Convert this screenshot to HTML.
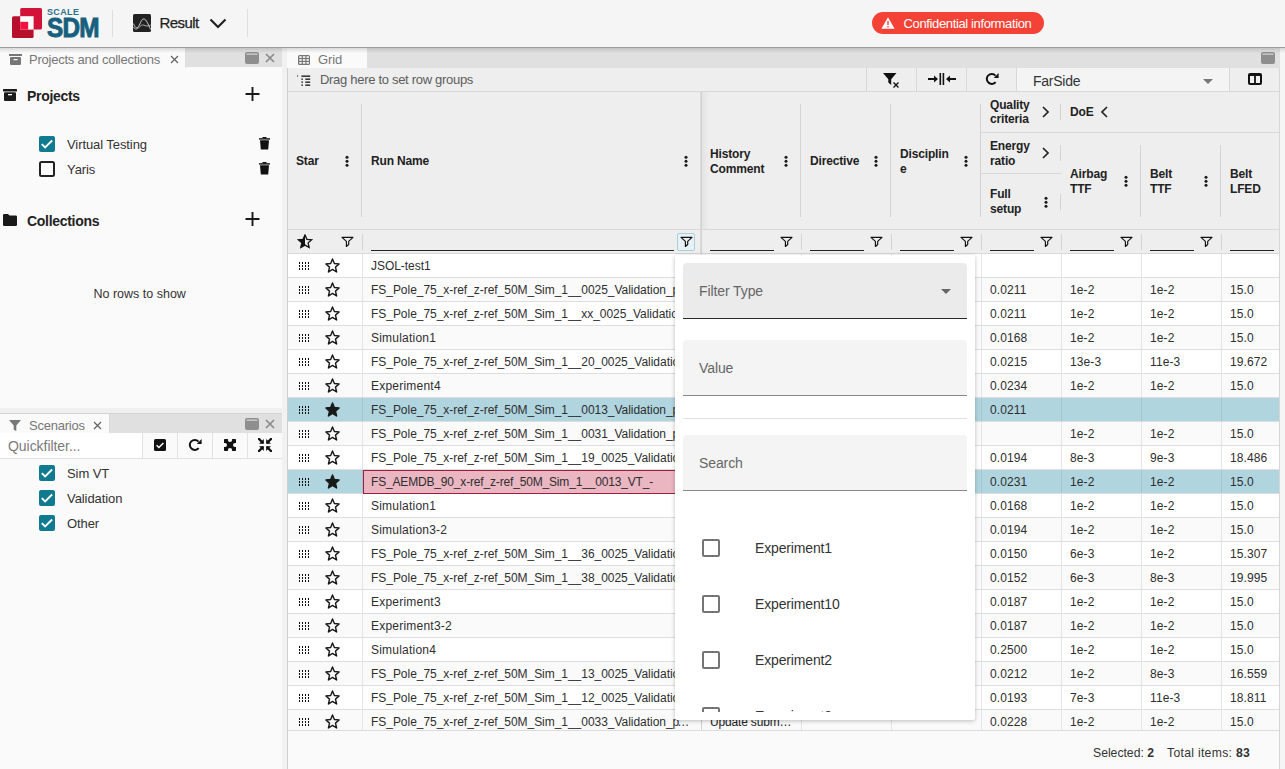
<!DOCTYPE html><html><head><meta charset="utf-8"><style>
*{box-sizing:border-box}
html,body{margin:0;padding:0}
body{width:1285px;height:769px;overflow:hidden;position:relative;background:#f5f5f5;font-family:"Liberation Sans",sans-serif;}
.t{position:absolute;white-space:nowrap;line-height:1}
.r{position:absolute}
.ic{position:absolute;line-height:0}
</style></head><body>
<div class="r" style="left:0px;top:0px;width:1285px;height:47px;background:#f5f5f5;"></div>
<div class="r" style="left:0px;top:47px;width:1285px;height:1px;background:#9c9c9c;z-index:60"></div>
<div class="r" style="left:0px;top:48px;width:1285px;height:5px;background:linear-gradient(rgba(0,0,0,.13),rgba(0,0,0,0));z-index:60"></div>
<svg class="ic" style="left:12px;top:8px" width="31" height="31" viewBox="0 0 31 31">
<rect x="0" y="8.2" width="21.6" height="21.8" rx="1.6" fill="#b8102c"/>
<rect x="8.2" y="0" width="21.8" height="21.6" rx="1.6" fill="#d3123a"/>
<rect x="8.2" y="8.2" width="13.4" height="13.4" fill="#ffffff"/>
<rect x="8.2" y="13.8" width="8" height="7.8" fill="#f2133e"/>
</svg>
<div class="t" style="left:47px;top:7.5px;font-size:9px;color:#2a6f8c;font-weight:bold;letter-spacing:0.35px;transform-origin:0 0;">SCALE</div>
<div class="t" style="left:46.5px;top:15px;font-size:27px;color:#16607e;font-weight:bold;letter-spacing:-0.8px;transform:scaleX(0.9);transform-origin:0 0;-webkit-text-stroke:0.9px #16607e;">SDM</div>
<div class="r" style="left:112px;top:10px;width:1px;height:27px;background:#dedede;"></div>
<svg class="ic" style="left:133px;top:14px" width="18" height="18" viewBox="0 0 18 18">
<rect x="0" y="0" width="18" height="18" rx="1.5" fill="#222"/>
<path d="M0.3 9.5C2 13, 3.5 15.5, 5.5 12.5S8.5 4.5, 11 5 15 10, 17.7 15.5" fill="none" stroke="#e0e0e0" stroke-width="0.9"/>
<path d="M0.3 13C2.5 16.5, 4.5 15, 7.5 12S13 14, 17.7 11" fill="none" stroke="#cfcfcf" stroke-width="0.8"/>
</svg>
<div class="t" style="left:159.5px;top:14.8px;font-size:15px;color:#1e1e1e;font-weight:normal;letter-spacing:-0.55px;-webkit-text-stroke:0.25px #1e1e1e;">Result</div>
<svg class="ic" style="left:209px;top:18px" width="18" height="11" viewBox="0 0 18 11"><path d="M1.5 1.5l7.5 7.5 7.5-7.5" fill="none" stroke="#222" stroke-width="2.2"/></svg>
<div class="r" style="left:247px;top:9px;width:1px;height:28px;background:#dedede;"></div>
<div class="r" style="left:872px;top:12px;width:172px;height:22px;background:#f44336;border-radius:11px"></div>
<svg class="ic" style="left:881px;top:17px" width="14" height="12" viewBox="0 0 14 12"><path d="M7 0.3L13.6 11.7H0.4z" fill="#fff"/><rect x="6.3" y="4" width="1.4" height="4" fill="#f44336"/><rect x="6.3" y="9" width="1.4" height="1.4" fill="#f44336"/></svg>
<div class="t" style="left:903.5px;top:17.3px;font-size:13px;color:#fff;font-weight:normal;letter-spacing:-0.36px;">Confidential information</div>
<div class="r" style="left:0px;top:48px;width:282px;height:721px;background:#fafafa;"></div>
<div class="r" style="left:0px;top:47px;width:282px;height:20px;background:#e0e0e0;"></div>
<div class="r" style="left:0px;top:47px;width:186px;height:21px;background:#fafafa;"></div>
<div class="r" style="left:185px;top:48px;width:1px;height:20px;background:#dedede;"></div>
<svg class="ic" style="left:9px;top:54px" width="13" height="11" viewBox="0 0 13 11"><rect x="0" y="0" width="13" height="2" fill="#777"/><rect x="1" y="3" width="11" height="8" rx="1" fill="#777"/><rect x="4.5" y="5" width="4" height="1.2" fill="#fafafa"/></svg>
<div class="t" style="left:29px;top:53px;font-size:13px;color:#777;font-weight:normal;letter-spacing:-0.23px;">Projects and collections</div>
<svg class="ic" style="left:170px;top:55px" width="9" height="9" viewBox="0 0 9 9"><path d="M1 1l7 7M8 1L1 8" stroke="#616161" stroke-width="1.2"/></svg>
<svg class="ic" style="left:245px;top:52px" width="14" height="12" viewBox="0 0 14 12"><rect x="0" y="0" width="14" height="12" rx="2" fill="#8e8e8e"/><rect x="1.5" y="1.6" width="11" height="1" fill="#e6e6e6"/></svg>
<svg class="ic" style="left:265px;top:53px" width="10" height="10" viewBox="0 0 10 10"><path d="M1 1l8 8M9 1L1 9" stroke="#8a8a8a" stroke-width="1.7"/></svg>
<svg class="ic" style="left:3px;top:89px" width="14" height="12" viewBox="0 0 14 12"><rect x="0" y="0" width="14" height="2.4" rx="0.5" fill="#1a1a1a"/><rect x="1" y="3.2" width="12" height="8.8" rx="1" fill="#1a1a1a"/><rect x="5" y="5" width="4" height="1.3" fill="#fafafa"/></svg>
<div class="t" style="left:27px;top:89px;font-size:14px;color:#222;font-weight:bold;letter-spacing:-0.3px;">Projects</div>
<svg class="ic" style="left:245px;top:87px" width="15" height="14" viewBox="0 0 15 14"><path d="M7.5 0v14M0.5 7h14" stroke="#1a1a1a" stroke-width="1.9"/></svg>
<svg class="ic" style="left:39px;top:136px" width="16" height="16" viewBox="0 0 16 16"><rect x="0" y="0" width="16" height="16" rx="2" fill="#107a90"/><path d="M2.8 8.2l3.3 3.3 7-7" fill="none" stroke="#fff" stroke-width="1.9"/></svg>
<div class="t" style="left:67px;top:138px;font-size:13px;color:#333;font-weight:normal;letter-spacing:-0.08px;">Virtual Testing</div>
<svg class="ic" style="left:259px;top:137px" width="11" height="13" viewBox="0 0 11 13"><rect x="0" y="1.2" width="11" height="1.4" fill="#111"/><rect x="3.5" y="0" width="4" height="1.5" fill="#111"/><path d="M1 3.2h9l-0.8 9.3H1.8z" fill="#111"/></svg>
<svg class="ic" style="left:39px;top:161px" width="16" height="16" viewBox="0 0 16 16"><rect x="1" y="1" width="14" height="14" rx="1.5" fill="none" stroke="#222" stroke-width="2"/></svg>
<div class="t" style="left:67px;top:163.3px;font-size:13px;color:#333;font-weight:normal;letter-spacing:-0.08px;">Yaris</div>
<svg class="ic" style="left:259px;top:162px" width="11" height="13" viewBox="0 0 11 13"><rect x="0" y="1.2" width="11" height="1.4" fill="#111"/><rect x="3.5" y="0" width="4" height="1.5" fill="#111"/><path d="M1 3.2h9l-0.8 9.3H1.8z" fill="#111"/></svg>
<svg class="ic" style="left:3px;top:214px" width="14" height="12" viewBox="0 0 14 12"><path d="M0 1.2Q0 0 1.2 0H5l1.5 1.6h6.3Q14 1.6 14 2.8V10.8Q14 12 12.8 12H1.2Q0 12 0 10.8z" fill="#1a1a1a"/></svg>
<div class="t" style="left:27px;top:214px;font-size:14px;color:#222;font-weight:bold;letter-spacing:-0.3px;">Collections</div>
<svg class="ic" style="left:245px;top:212px" width="15" height="14" viewBox="0 0 15 14"><path d="M7.5 0v14M0.5 7h14" stroke="#1a1a1a" stroke-width="1.9"/></svg>
<div class="t" style="left:93.5px;top:288px;font-size:12.5px;color:#333;font-weight:normal;letter-spacing:0px;">No rows to show</div>
<div class="r" style="left:0px;top:408px;width:282px;height:5px;background:#f0f0f0;"></div>
<div class="r" style="left:0px;top:413px;width:282px;height:20px;background:#e0e0e0;"></div>
<div class="r" style="left:0px;top:413px;width:282px;height:1px;background:#d2d2d2;"></div>
<div class="r" style="left:0px;top:414px;width:110px;height:20px;background:#fafafa;"></div>
<div class="r" style="left:109px;top:414px;width:1px;height:20px;background:#dadada;"></div>
<svg class="ic" style="left:9px;top:420px" width="12" height="11" viewBox="0 0 12 11"><path d="M0 0h12L7.3 5.5V11L4.7 9.7V5.5z" fill="#777"/></svg>
<div class="t" style="left:29px;top:419px;font-size:13px;color:#777;font-weight:normal;letter-spacing:-0.23px;">Scenarios</div>
<svg class="ic" style="left:93px;top:421px" width="9" height="9" viewBox="0 0 9 9"><path d="M1 1l7 7M8 1L1 8" stroke="#616161" stroke-width="1.2"/></svg>
<svg class="ic" style="left:245px;top:418px" width="14" height="12" viewBox="0 0 14 12"><rect x="0" y="0" width="14" height="12" rx="2" fill="#8e8e8e"/><rect x="1.5" y="1.6" width="11" height="1" fill="#e6e6e6"/></svg>
<svg class="ic" style="left:265px;top:419px" width="10" height="10" viewBox="0 0 10 10"><path d="M1 1l8 8M9 1L1 9" stroke="#8a8a8a" stroke-width="1.7"/></svg>
<div class="r" style="left:0px;top:433px;width:282px;height:25px;background:#fafafa;"></div>
<div class="r" style="left:0px;top:433px;width:142px;height:25px;background:#ffffff;"></div>
<div class="r" style="left:0px;top:458px;width:282px;height:1px;background:#e2e2e2;"></div>
<div class="r" style="left:142px;top:433px;width:1px;height:25px;background:#e2e2e2;"></div>
<div class="r" style="left:177px;top:433px;width:1px;height:25px;background:#e2e2e2;"></div>
<div class="r" style="left:212px;top:433px;width:1px;height:25px;background:#e2e2e2;"></div>
<div class="r" style="left:247px;top:433px;width:1px;height:25px;background:#e2e2e2;"></div>
<div class="t" style="left:8px;top:439.3px;font-size:14px;color:#7a7a7a;font-weight:normal;letter-spacing:-0.05px;">Quickfilter...</div>
<svg class="ic" style="left:154px;top:439px" width="12" height="12" viewBox="0 0 12 12"><rect width="12" height="12" rx="1.5" fill="#111"/><path d="M2.6 6.2l2.3 2.3 4.5-4.6" fill="none" stroke="#fff" stroke-width="1.5"/></svg>
<svg class="ic" style="left:186.5px;top:438px" width="16" height="14" viewBox="0 0 16 14"><path d="M11.5 3.55A5 5 0 1 0 11.63 10.11" fill="none" stroke="#111" stroke-width="2"/><path d="M14.6 1.1V5.9H9.8z" fill="#111"/></svg>
<svg class="ic" style="left:224px;top:439px" width="12" height="12" viewBox="0 0 12 12"><rect width="12" height="12" rx="0.8" fill="#111"/><circle cx="6" cy="0.9" r="2.1" fill="#fafafa"/><circle cx="6" cy="11.1" r="2.1" fill="#fafafa"/><circle cx="0.9" cy="6" r="2.1" fill="#fafafa"/><circle cx="11.1" cy="6" r="2.1" fill="#fafafa"/></svg>
<svg class="ic" style="left:258px;top:438px" width="14" height="14" viewBox="0 0 14 14"><path d="M1 5.8H5.8V1zM13 5.8H8.2V1zM1 8.2H5.8V13zM13 8.2H8.2V13z" fill="#111"/><path d="M0.9 0.9L4.5 4.5M13.1 0.9L9.5 4.5M0.9 13.1L4.5 9.5M13.1 13.1L9.5 9.5" stroke="#111" stroke-width="2.2" stroke-linecap="round"/></svg>
<svg class="ic" style="left:39px;top:465px" width="16" height="16" viewBox="0 0 16 16"><rect x="0" y="0" width="16" height="16" rx="2" fill="#107a90"/><path d="M2.8 8.2l3.3 3.3 7-7" fill="none" stroke="#fff" stroke-width="1.9"/></svg>
<div class="t" style="left:67px;top:467px;font-size:13px;color:#333;font-weight:normal;letter-spacing:-0.08px;">Sim VT</div>
<svg class="ic" style="left:39px;top:490px" width="16" height="16" viewBox="0 0 16 16"><rect x="0" y="0" width="16" height="16" rx="2" fill="#107a90"/><path d="M2.8 8.2l3.3 3.3 7-7" fill="none" stroke="#fff" stroke-width="1.9"/></svg>
<div class="t" style="left:67px;top:492px;font-size:13px;color:#333;font-weight:normal;letter-spacing:-0.08px;">Validation</div>
<svg class="ic" style="left:39px;top:515px" width="16" height="16" viewBox="0 0 16 16"><rect x="0" y="0" width="16" height="16" rx="2" fill="#107a90"/><path d="M2.8 8.2l3.3 3.3 7-7" fill="none" stroke="#fff" stroke-width="1.9"/></svg>
<div class="t" style="left:67px;top:517px;font-size:13px;color:#333;font-weight:normal;letter-spacing:-0.08px;">Other</div>
<div class="r" style="left:282px;top:47px;width:5px;height:722px;background:#f1f1f1;"></div>
<div class="r" style="left:1280px;top:47px;width:5px;height:722px;background:#f5f5f5;"></div>
<div class="r" style="left:287px;top:47px;width:993px;height:21px;background:#e0e0e0;"></div>
<div class="r" style="left:287px;top:47px;width:80px;height:21px;background:#fafafa;"></div>
<svg class="ic" style="left:298px;top:55px" width="12" height="10" viewBox="0 0 12 10"><rect width="12" height="10" rx="1.5" fill="#777"/><rect x="1.3" y="1.2" width="2.4" height="1.7" fill="#fafafa"/><rect x="1.3" y="4.1" width="2.4" height="1.7" fill="#fafafa"/><rect x="1.3" y="7.0" width="2.4" height="1.7" fill="#fafafa"/><rect x="4.9" y="1.2" width="2.4" height="1.7" fill="#fafafa"/><rect x="4.9" y="4.1" width="2.4" height="1.7" fill="#fafafa"/><rect x="4.9" y="7.0" width="2.4" height="1.7" fill="#fafafa"/><rect x="8.5" y="1.2" width="2.4" height="1.7" fill="#fafafa"/><rect x="8.5" y="4.1" width="2.4" height="1.7" fill="#fafafa"/><rect x="8.5" y="7.0" width="2.4" height="1.7" fill="#fafafa"/></svg>
<div class="t" style="left:318px;top:53px;font-size:13px;color:#777;font-weight:normal;letter-spacing:-0.1px;">Grid</div>
<svg class="ic" style="left:1261px;top:52px" width="14" height="12" viewBox="0 0 14 12"><rect x="0" y="0" width="14" height="12" rx="2" fill="#8e8e8e"/><rect x="1.5" y="1.6" width="11" height="1" fill="#e6e6e6"/></svg>
<div class="r" style="left:287px;top:68px;width:993px;height:701px;background:#fafafa;"></div>
<div class="r" style="left:287px;top:68px;width:1px;height:701px;background:#d0d0d0;"></div>
<div class="r" style="left:1279px;top:68px;width:1px;height:701px;background:#d6d6d6;"></div>
<div class="r" style="left:288px;top:68px;width:991px;height:23px;background:#eeeeee;"></div>
<div class="r" style="left:288px;top:91px;width:991px;height:1px;background:#d8d8d8;"></div>
<svg class="ic" style="left:297px;top:74.5px" width="14" height="11" viewBox="0 0 14 11"><rect x="0" y="0.5" width="1" height="1" fill="#111"/><rect x="4.4" y="0.5" width="8.8" height="1.3" fill="#111"/><rect x="4.4" y="3.5" width="1.5" height="1.3" fill="#111"/><rect x="8.3" y="3.5" width="4.9" height="1.3" fill="#111"/><rect x="4.4" y="6.5" width="1.5" height="1.3" fill="#111"/><rect x="8.3" y="6.5" width="4.9" height="1.3" fill="#111"/><rect x="4.4" y="9.5" width="1.5" height="1.3" fill="#111"/><rect x="8.3" y="9.5" width="4.9" height="1.3" fill="#111"/></svg>
<div class="t" style="left:320px;top:73px;font-size:13px;color:#5c5c5c;font-weight:normal;letter-spacing:-0.3px;">Drag here to set row groups</div>
<div class="r" style="left:866px;top:68px;width:1px;height:23px;background:#d8d8d8;"></div>
<div class="r" style="left:916px;top:68px;width:1px;height:23px;background:#d8d8d8;"></div>
<div class="r" style="left:966px;top:68px;width:1px;height:23px;background:#d8d8d8;"></div>
<div class="r" style="left:1016px;top:68px;width:213px;height:23px;background:#f4f4f4;"></div>
<div class="r" style="left:1016px;top:68px;width:1px;height:23px;background:#d8d8d8;"></div>
<div class="r" style="left:1229px;top:68px;width:1px;height:23px;background:#d8d8d8;"></div>
<svg class="ic" style="left:883px;top:73px" width="18" height="16" viewBox="0 0 18 16"><path d="M0 0h13.5L8.2 6.2V12L5.3 9.5V6.2z" fill="#111"/><path d="M10.5 9.5l5 5M15.5 9.5l-5 5" stroke="#111" stroke-width="1.4"/></svg>
<svg class="ic" style="left:928px;top:73px" width="28" height="12" viewBox="0 0 28 12"><path d="M0 6h7" stroke="#111" stroke-width="2"/><path d="M6 2.5l4 3.5-4 3.5z" fill="#111"/><rect x="11.5" y="0" width="1.6" height="12" fill="#111"/><rect x="14.6" y="0" width="1.6" height="12" fill="#111"/><path d="M21 6h7" stroke="#111" stroke-width="2"/><path d="M22 2.5l-4 3.5 4 3.5z" fill="#111"/></svg>
<svg class="ic" style="left:984px;top:72px" width="16" height="14" viewBox="0 0 16 14"><path d="M11.5 3.55A5 5 0 1 0 11.63 10.11" fill="none" stroke="#111" stroke-width="2"/><path d="M14.6 1.1V5.9H9.8z" fill="#111"/></svg>
<div class="t" style="left:1033px;top:74px;font-size:14px;color:#333;font-weight:normal;letter-spacing:-0.25px;">FarSide</div>
<svg class="ic" style="left:1203px;top:79px" width="10" height="5" viewBox="0 0 10 5"><path d="M0 0h10L5 5z" fill="#777"/></svg>
<svg class="ic" style="left:1248px;top:73px" width="14" height="12" viewBox="0 0 14 12"><rect x="0" y="0" width="14" height="12" rx="2" fill="#111"/><rect x="2" y="3" width="4.1" height="7" fill="#f0f0f0"/><rect x="7.9" y="3" width="4.1" height="7" fill="#f0f0f0"/></svg>
<div class="r" style="left:288px;top:92px;width:991px;height:137px;background:#eeeeee;"></div>
<div class="r" style="left:288px;top:229px;width:991px;height:1px;background:#d8d8d8;"></div>
<div class="r" style="left:288px;top:230px;width:991px;height:23px;background:#eeeeee;"></div>
<div class="r" style="left:288px;top:253px;width:991px;height:1px;background:#d8d8d8;"></div>
<div class="t" style="left:296px;top:155px;font-size:12px;color:#222;font-weight:bold;letter-spacing:-0.15px;">Star</div>
<div class="ic" style="left:345px;top:155px"><svg width="4" height="13" viewBox="0 0 4 13"><circle cx="2" cy="2.2" r="1.5" fill="#1a1a1a"/><circle cx="2" cy="6.2" r="1.5" fill="#1a1a1a"/><circle cx="2" cy="10.2" r="1.5" fill="#1a1a1a"/></svg></div>
<div class="r" style="left:361px;top:104px;width:1px;height:113px;background:#d4d4d4;"></div>
<div class="t" style="left:371px;top:155px;font-size:12px;color:#222;font-weight:bold;letter-spacing:-0.15px;">Run Name</div>
<div class="ic" style="left:684px;top:155px"><svg width="4" height="13" viewBox="0 0 4 13"><circle cx="2" cy="2.2" r="1.5" fill="#1a1a1a"/><circle cx="2" cy="6.2" r="1.5" fill="#1a1a1a"/><circle cx="2" cy="10.2" r="1.5" fill="#1a1a1a"/></svg></div>
<div class="t" style="left:710px;top:148px;font-size:12px;color:#222;font-weight:bold;letter-spacing:-0.15px;">History</div>
<div class="t" style="left:710px;top:163px;font-size:12px;color:#222;font-weight:bold;letter-spacing:-0.15px;">Comment</div>
<div class="ic" style="left:784px;top:155px"><svg width="4" height="13" viewBox="0 0 4 13"><circle cx="2" cy="2.2" r="1.5" fill="#1a1a1a"/><circle cx="2" cy="6.2" r="1.5" fill="#1a1a1a"/><circle cx="2" cy="10.2" r="1.5" fill="#1a1a1a"/></svg></div>
<div class="r" style="left:800px;top:104px;width:1px;height:113px;background:#d4d4d4;"></div>
<div class="t" style="left:810px;top:155px;font-size:12px;color:#222;font-weight:bold;letter-spacing:-0.15px;">Directive</div>
<div class="ic" style="left:874px;top:155px"><svg width="4" height="13" viewBox="0 0 4 13"><circle cx="2" cy="2.2" r="1.5" fill="#1a1a1a"/><circle cx="2" cy="6.2" r="1.5" fill="#1a1a1a"/><circle cx="2" cy="10.2" r="1.5" fill="#1a1a1a"/></svg></div>
<div class="r" style="left:890px;top:104px;width:1px;height:113px;background:#d4d4d4;"></div>
<div class="t" style="left:900px;top:148px;font-size:12px;color:#222;font-weight:bold;letter-spacing:-0.15px;">Disciplin</div>
<div class="t" style="left:900px;top:163px;font-size:12px;color:#222;font-weight:bold;letter-spacing:-0.15px;">e</div>
<div class="ic" style="left:964px;top:155px"><svg width="4" height="13" viewBox="0 0 4 13"><circle cx="2" cy="2.2" r="1.5" fill="#1a1a1a"/><circle cx="2" cy="6.2" r="1.5" fill="#1a1a1a"/><circle cx="2" cy="10.2" r="1.5" fill="#1a1a1a"/></svg></div>
<div class="r" style="left:980px;top:104px;width:1px;height:113px;background:#d4d4d4;"></div>
<div class="r" style="left:981px;top:132px;width:298px;height:1px;background:#d8d8d8;"></div>
<div class="r" style="left:981px;top:173px;width:80px;height:1px;background:#d8d8d8;"></div>
<div class="t" style="left:990px;top:99px;font-size:12px;color:#222;font-weight:bold;letter-spacing:-0.15px;">Quality</div>
<div class="t" style="left:990px;top:113px;font-size:12px;color:#222;font-weight:bold;letter-spacing:-0.15px;">criteria</div>
<svg class="ic" style="left:1042px;top:106px" width="7" height="12" viewBox="0 0 7 12"><path d="M1 1l5 5-5 5" fill="none" stroke="#222" stroke-width="1.6"/></svg>
<div class="r" style="left:1060px;top:104px;width:1px;height:16px;background:#d4d4d4;"></div>
<div class="t" style="left:1070px;top:106px;font-size:12px;color:#222;font-weight:bold;letter-spacing:-0.15px;">DoE</div>
<svg class="ic" style="left:1101px;top:106px" width="7" height="12" viewBox="0 0 7 12"><path d="M6 1L1 6l5 5" fill="none" stroke="#222" stroke-width="1.6"/></svg>
<div class="t" style="left:990px;top:140px;font-size:12px;color:#222;font-weight:bold;letter-spacing:-0.15px;">Energy</div>
<div class="t" style="left:990px;top:155px;font-size:12px;color:#222;font-weight:bold;letter-spacing:-0.15px;">ratio</div>
<svg class="ic" style="left:1042px;top:147px" width="7" height="12" viewBox="0 0 7 12"><path d="M1 1l5 5-5 5" fill="none" stroke="#222" stroke-width="1.6"/></svg>
<div class="r" style="left:1060px;top:145px;width:1px;height:16px;background:#d4d4d4;"></div>
<div class="t" style="left:990px;top:188px;font-size:12px;color:#222;font-weight:bold;letter-spacing:-0.15px;">Full</div>
<div class="t" style="left:990px;top:203px;font-size:12px;color:#222;font-weight:bold;letter-spacing:-0.15px;">setup</div>
<div class="ic" style="left:1044px;top:196px"><svg width="4" height="13" viewBox="0 0 4 13"><circle cx="2" cy="2.2" r="1.5" fill="#1a1a1a"/><circle cx="2" cy="6.2" r="1.5" fill="#1a1a1a"/><circle cx="2" cy="10.2" r="1.5" fill="#1a1a1a"/></svg></div>
<div class="r" style="left:1060px;top:194px;width:1px;height:16px;background:#d4d4d4;"></div>
<div class="t" style="left:1070px;top:168px;font-size:12px;color:#222;font-weight:bold;letter-spacing:-0.15px;">Airbag</div>
<div class="t" style="left:1070px;top:183px;font-size:12px;color:#222;font-weight:bold;letter-spacing:-0.15px;">TTF</div>
<div class="ic" style="left:1124px;top:175px"><svg width="4" height="13" viewBox="0 0 4 13"><circle cx="2" cy="2.2" r="1.5" fill="#1a1a1a"/><circle cx="2" cy="6.2" r="1.5" fill="#1a1a1a"/><circle cx="2" cy="10.2" r="1.5" fill="#1a1a1a"/></svg></div>
<div class="r" style="left:1140px;top:145px;width:1px;height:72px;background:#d4d4d4;"></div>
<div class="t" style="left:1150px;top:168px;font-size:12px;color:#222;font-weight:bold;letter-spacing:-0.15px;">Belt</div>
<div class="t" style="left:1150px;top:183px;font-size:12px;color:#222;font-weight:bold;letter-spacing:-0.15px;">TTF</div>
<div class="ic" style="left:1204px;top:175px"><svg width="4" height="13" viewBox="0 0 4 13"><circle cx="2" cy="2.2" r="1.5" fill="#1a1a1a"/><circle cx="2" cy="6.2" r="1.5" fill="#1a1a1a"/><circle cx="2" cy="10.2" r="1.5" fill="#1a1a1a"/></svg></div>
<div class="r" style="left:1220px;top:145px;width:1px;height:72px;background:#d4d4d4;"></div>
<div class="t" style="left:1230px;top:168px;font-size:12px;color:#222;font-weight:bold;letter-spacing:-0.15px;">Belt</div>
<div class="t" style="left:1230px;top:183px;font-size:12px;color:#222;font-weight:bold;letter-spacing:-0.15px;">LFED</div>
<svg class="ic" style="left:297px;top:234px" width="16" height="15" viewBox="0 0 24 23"><path d="M12 1.5l3 6.6 7.2.7-5.4 4.8 1.6 7.1L12 17l-6.4 3.7 1.6-7.1L1.8 8.8 9 8.1z" fill="none" stroke="#111" stroke-width="2"/><path d="M12 1.5L9 8.1 1.8 8.8l5.4 4.8-1.6 7.1L12 17z" fill="#111"/></svg>
<div class="ic" style="left:341px;top:236px"><svg width="13" height="12" viewBox="0 0 13 12"><path d="M1 1.4H12L7.7 5.4V8.5L5.4 10.5V5.4Z" fill="none" stroke="#111" stroke-width="1.15" stroke-linejoin="round"/></svg></div>
<div class="r" style="left:362px;top:234px;width:1px;height:16px;background:#d4d4d4;"></div>
<div class="r" style="left:371px;top:250px;width:303px;height:1px;background:#222;"></div>
<div class="r" style="left:677px;top:233px;width:18px;height:18px;background:#e8f1f4;border:1px solid #a9cfdc;border-radius:2px"></div>
<div class="ic" style="left:680px;top:236px"><svg width="13" height="12" viewBox="0 0 13 12"><path d="M1 1.4H12L7.7 5.4V8.5L5.4 10.5V5.4Z" fill="none" stroke="#111" stroke-width="1.15" stroke-linejoin="round"/></svg></div>
<div class="r" style="left:710px;top:250px;width:64px;height:1px;background:#222;"></div>
<div class="ic" style="left:780px;top:236px"><svg width="13" height="12" viewBox="0 0 13 12"><path d="M1 1.4H12L7.7 5.4V8.5L5.4 10.5V5.4Z" fill="none" stroke="#111" stroke-width="1.15" stroke-linejoin="round"/></svg></div>
<div class="r" style="left:801px;top:234px;width:1px;height:16px;background:#d4d4d4;"></div>
<div class="r" style="left:810px;top:250px;width:54px;height:1px;background:#222;"></div>
<div class="ic" style="left:870px;top:236px"><svg width="13" height="12" viewBox="0 0 13 12"><path d="M1 1.4H12L7.7 5.4V8.5L5.4 10.5V5.4Z" fill="none" stroke="#111" stroke-width="1.15" stroke-linejoin="round"/></svg></div>
<div class="r" style="left:891px;top:234px;width:1px;height:16px;background:#d4d4d4;"></div>
<div class="r" style="left:900px;top:250px;width:54px;height:1px;background:#222;"></div>
<div class="ic" style="left:960px;top:236px"><svg width="13" height="12" viewBox="0 0 13 12"><path d="M1 1.4H12L7.7 5.4V8.5L5.4 10.5V5.4Z" fill="none" stroke="#111" stroke-width="1.15" stroke-linejoin="round"/></svg></div>
<div class="r" style="left:981px;top:234px;width:1px;height:16px;background:#d4d4d4;"></div>
<div class="r" style="left:990px;top:250px;width:44px;height:1px;background:#222;"></div>
<div class="ic" style="left:1040px;top:236px"><svg width="13" height="12" viewBox="0 0 13 12"><path d="M1 1.4H12L7.7 5.4V8.5L5.4 10.5V5.4Z" fill="none" stroke="#111" stroke-width="1.15" stroke-linejoin="round"/></svg></div>
<div class="r" style="left:1061px;top:234px;width:1px;height:16px;background:#d4d4d4;"></div>
<div class="r" style="left:1070px;top:250px;width:44px;height:1px;background:#222;"></div>
<div class="ic" style="left:1120px;top:236px"><svg width="13" height="12" viewBox="0 0 13 12"><path d="M1 1.4H12L7.7 5.4V8.5L5.4 10.5V5.4Z" fill="none" stroke="#111" stroke-width="1.15" stroke-linejoin="round"/></svg></div>
<div class="r" style="left:1141px;top:234px;width:1px;height:16px;background:#d4d4d4;"></div>
<div class="r" style="left:1150px;top:250px;width:44px;height:1px;background:#222;"></div>
<div class="ic" style="left:1200px;top:236px"><svg width="13" height="12" viewBox="0 0 13 12"><path d="M1 1.4H12L7.7 5.4V8.5L5.4 10.5V5.4Z" fill="none" stroke="#111" stroke-width="1.15" stroke-linejoin="round"/></svg></div>
<div class="r" style="left:1221px;top:234px;width:1px;height:16px;background:#d4d4d4;"></div>
<div class="r" style="left:1230px;top:250px;width:44px;height:1px;background:#222;"></div>
<div class="r" style="left:288px;top:254px;width:991px;height:476px;overflow:hidden">
<div class="r" style="left:0;top:0px;width:991px;height:24px;background:#ffffff;border-bottom:1px solid #dedede"></div>
<div class="r" style="left:74px;top:0px;width:1px;height:23px;background:#e4e4e4"></div>
<div class="r" style="left:413px;top:0px;width:1px;height:23px;background:#d2d2d2"></div>
<div class="r" style="left:513px;top:0px;width:1px;height:23px;background:#e4e4e4"></div>
<div class="r" style="left:603px;top:0px;width:1px;height:23px;background:#e4e4e4"></div>
<div class="r" style="left:693px;top:0px;width:1px;height:23px;background:#e4e4e4"></div>
<div class="r" style="left:773px;top:0px;width:1px;height:23px;background:#e4e4e4"></div>
<div class="r" style="left:853px;top:0px;width:1px;height:23px;background:#e4e4e4"></div>
<div class="r" style="left:933px;top:0px;width:1px;height:23px;background:#e4e4e4"></div>
<div class="ic" style="left:11px;top:8px"><svg width="12" height="9" viewBox="0 0 12 9"><rect x="0" y="0" width="1" height="2" fill="#0a0a0a"/><rect x="0" y="3" width="1" height="2" fill="#0a0a0a"/><rect x="0" y="6" width="1" height="2" fill="#0a0a0a"/><rect x="3" y="0" width="1" height="2" fill="#0a0a0a"/><rect x="3" y="3" width="1" height="2" fill="#0a0a0a"/><rect x="3" y="6" width="1" height="2" fill="#0a0a0a"/><rect x="6" y="0" width="1" height="2" fill="#0a0a0a"/><rect x="6" y="3" width="1" height="2" fill="#0a0a0a"/><rect x="6" y="6" width="1" height="2" fill="#0a0a0a"/><rect x="9" y="0" width="1" height="2" fill="#0a0a0a"/><rect x="9" y="3" width="1" height="2" fill="#0a0a0a"/><rect x="9" y="6" width="1" height="2" fill="#0a0a0a"/></svg></div>
<div class="ic" style="left:36px;top:3px"><svg width="17" height="17" viewBox="0 0 17 17"><path d="M8.5 2L10.36 6.46L15.1 6.95L11.5 10.1L12.6 15L8.5 12.4L4.46 15L5.5 10.1L1.9 6.95L6.63 6.46Z" fill="none" stroke="#1a1a1a" stroke-width="1.45" stroke-linejoin="round"/></svg></div>
<div class="t" style="left:83px;top:3px;height:18px;line-height:18px;width:322px;overflow:hidden;font-size:12px;color:#2e2e2e;letter-spacing:-0.04px">JSOL-test1</div>
<div class="r" style="left:0;top:24px;width:991px;height:24px;background:#fafafa;border-bottom:1px solid #dedede"></div>
<div class="r" style="left:74px;top:24px;width:1px;height:23px;background:#e4e4e4"></div>
<div class="r" style="left:413px;top:24px;width:1px;height:23px;background:#d2d2d2"></div>
<div class="r" style="left:513px;top:24px;width:1px;height:23px;background:#e4e4e4"></div>
<div class="r" style="left:603px;top:24px;width:1px;height:23px;background:#e4e4e4"></div>
<div class="r" style="left:693px;top:24px;width:1px;height:23px;background:#e4e4e4"></div>
<div class="r" style="left:773px;top:24px;width:1px;height:23px;background:#e4e4e4"></div>
<div class="r" style="left:853px;top:24px;width:1px;height:23px;background:#e4e4e4"></div>
<div class="r" style="left:933px;top:24px;width:1px;height:23px;background:#e4e4e4"></div>
<div class="ic" style="left:11px;top:32px"><svg width="12" height="9" viewBox="0 0 12 9"><rect x="0" y="0" width="1" height="2" fill="#0a0a0a"/><rect x="0" y="3" width="1" height="2" fill="#0a0a0a"/><rect x="0" y="6" width="1" height="2" fill="#0a0a0a"/><rect x="3" y="0" width="1" height="2" fill="#0a0a0a"/><rect x="3" y="3" width="1" height="2" fill="#0a0a0a"/><rect x="3" y="6" width="1" height="2" fill="#0a0a0a"/><rect x="6" y="0" width="1" height="2" fill="#0a0a0a"/><rect x="6" y="3" width="1" height="2" fill="#0a0a0a"/><rect x="6" y="6" width="1" height="2" fill="#0a0a0a"/><rect x="9" y="0" width="1" height="2" fill="#0a0a0a"/><rect x="9" y="3" width="1" height="2" fill="#0a0a0a"/><rect x="9" y="6" width="1" height="2" fill="#0a0a0a"/></svg></div>
<div class="ic" style="left:36px;top:27px"><svg width="17" height="17" viewBox="0 0 17 17"><path d="M8.5 2L10.36 6.46L15.1 6.95L11.5 10.1L12.6 15L8.5 12.4L4.46 15L5.5 10.1L1.9 6.95L6.63 6.46Z" fill="none" stroke="#1a1a1a" stroke-width="1.45" stroke-linejoin="round"/></svg></div>
<div class="t" style="left:83px;top:27px;height:18px;line-height:18px;width:322px;overflow:hidden;font-size:12px;color:#2e2e2e;letter-spacing:-0.035px">FS_Pole_75_x-ref_z-ref_50M_Sim_1__0025_Validation_p</div>
<div class="t" style="left:702px;top:30px;font-size:12px;color:#2e2e2e;letter-spacing:0.1px">0.0211</div>
<div class="t" style="left:782px;top:30px;font-size:12px;color:#2e2e2e;letter-spacing:0.1px">1e-2</div>
<div class="t" style="left:862px;top:30px;font-size:12px;color:#2e2e2e;letter-spacing:0.1px">1e-2</div>
<div class="t" style="left:942px;top:30px;font-size:12px;color:#2e2e2e;letter-spacing:0.1px">15.0</div>
<div class="r" style="left:0;top:48px;width:991px;height:24px;background:#ffffff;border-bottom:1px solid #dedede"></div>
<div class="r" style="left:74px;top:48px;width:1px;height:23px;background:#e4e4e4"></div>
<div class="r" style="left:413px;top:48px;width:1px;height:23px;background:#d2d2d2"></div>
<div class="r" style="left:513px;top:48px;width:1px;height:23px;background:#e4e4e4"></div>
<div class="r" style="left:603px;top:48px;width:1px;height:23px;background:#e4e4e4"></div>
<div class="r" style="left:693px;top:48px;width:1px;height:23px;background:#e4e4e4"></div>
<div class="r" style="left:773px;top:48px;width:1px;height:23px;background:#e4e4e4"></div>
<div class="r" style="left:853px;top:48px;width:1px;height:23px;background:#e4e4e4"></div>
<div class="r" style="left:933px;top:48px;width:1px;height:23px;background:#e4e4e4"></div>
<div class="ic" style="left:11px;top:56px"><svg width="12" height="9" viewBox="0 0 12 9"><rect x="0" y="0" width="1" height="2" fill="#0a0a0a"/><rect x="0" y="3" width="1" height="2" fill="#0a0a0a"/><rect x="0" y="6" width="1" height="2" fill="#0a0a0a"/><rect x="3" y="0" width="1" height="2" fill="#0a0a0a"/><rect x="3" y="3" width="1" height="2" fill="#0a0a0a"/><rect x="3" y="6" width="1" height="2" fill="#0a0a0a"/><rect x="6" y="0" width="1" height="2" fill="#0a0a0a"/><rect x="6" y="3" width="1" height="2" fill="#0a0a0a"/><rect x="6" y="6" width="1" height="2" fill="#0a0a0a"/><rect x="9" y="0" width="1" height="2" fill="#0a0a0a"/><rect x="9" y="3" width="1" height="2" fill="#0a0a0a"/><rect x="9" y="6" width="1" height="2" fill="#0a0a0a"/></svg></div>
<div class="ic" style="left:36px;top:51px"><svg width="17" height="17" viewBox="0 0 17 17"><path d="M8.5 2L10.36 6.46L15.1 6.95L11.5 10.1L12.6 15L8.5 12.4L4.46 15L5.5 10.1L1.9 6.95L6.63 6.46Z" fill="none" stroke="#1a1a1a" stroke-width="1.45" stroke-linejoin="round"/></svg></div>
<div class="t" style="left:83px;top:51px;height:18px;line-height:18px;width:322px;overflow:hidden;font-size:12px;color:#2e2e2e;letter-spacing:-0.035px">FS_Pole_75_x-ref_z-ref_50M_Sim_1__xx_0025_Validation</div>
<div class="t" style="left:702px;top:54px;font-size:12px;color:#2e2e2e;letter-spacing:0.1px">0.0211</div>
<div class="t" style="left:782px;top:54px;font-size:12px;color:#2e2e2e;letter-spacing:0.1px">1e-2</div>
<div class="t" style="left:862px;top:54px;font-size:12px;color:#2e2e2e;letter-spacing:0.1px">1e-2</div>
<div class="t" style="left:942px;top:54px;font-size:12px;color:#2e2e2e;letter-spacing:0.1px">15.0</div>
<div class="r" style="left:0;top:72px;width:991px;height:24px;background:#fafafa;border-bottom:1px solid #dedede"></div>
<div class="r" style="left:74px;top:72px;width:1px;height:23px;background:#e4e4e4"></div>
<div class="r" style="left:413px;top:72px;width:1px;height:23px;background:#d2d2d2"></div>
<div class="r" style="left:513px;top:72px;width:1px;height:23px;background:#e4e4e4"></div>
<div class="r" style="left:603px;top:72px;width:1px;height:23px;background:#e4e4e4"></div>
<div class="r" style="left:693px;top:72px;width:1px;height:23px;background:#e4e4e4"></div>
<div class="r" style="left:773px;top:72px;width:1px;height:23px;background:#e4e4e4"></div>
<div class="r" style="left:853px;top:72px;width:1px;height:23px;background:#e4e4e4"></div>
<div class="r" style="left:933px;top:72px;width:1px;height:23px;background:#e4e4e4"></div>
<div class="ic" style="left:11px;top:80px"><svg width="12" height="9" viewBox="0 0 12 9"><rect x="0" y="0" width="1" height="2" fill="#0a0a0a"/><rect x="0" y="3" width="1" height="2" fill="#0a0a0a"/><rect x="0" y="6" width="1" height="2" fill="#0a0a0a"/><rect x="3" y="0" width="1" height="2" fill="#0a0a0a"/><rect x="3" y="3" width="1" height="2" fill="#0a0a0a"/><rect x="3" y="6" width="1" height="2" fill="#0a0a0a"/><rect x="6" y="0" width="1" height="2" fill="#0a0a0a"/><rect x="6" y="3" width="1" height="2" fill="#0a0a0a"/><rect x="6" y="6" width="1" height="2" fill="#0a0a0a"/><rect x="9" y="0" width="1" height="2" fill="#0a0a0a"/><rect x="9" y="3" width="1" height="2" fill="#0a0a0a"/><rect x="9" y="6" width="1" height="2" fill="#0a0a0a"/></svg></div>
<div class="ic" style="left:36px;top:75px"><svg width="17" height="17" viewBox="0 0 17 17"><path d="M8.5 2L10.36 6.46L15.1 6.95L11.5 10.1L12.6 15L8.5 12.4L4.46 15L5.5 10.1L1.9 6.95L6.63 6.46Z" fill="none" stroke="#1a1a1a" stroke-width="1.45" stroke-linejoin="round"/></svg></div>
<div class="t" style="left:83px;top:75px;height:18px;line-height:18px;width:322px;overflow:hidden;font-size:12px;color:#2e2e2e;letter-spacing:0.22px">Simulation1</div>
<div class="t" style="left:702px;top:78px;font-size:12px;color:#2e2e2e;letter-spacing:0.1px">0.0168</div>
<div class="t" style="left:782px;top:78px;font-size:12px;color:#2e2e2e;letter-spacing:0.1px">1e-2</div>
<div class="t" style="left:862px;top:78px;font-size:12px;color:#2e2e2e;letter-spacing:0.1px">1e-2</div>
<div class="t" style="left:942px;top:78px;font-size:12px;color:#2e2e2e;letter-spacing:0.1px">15.0</div>
<div class="r" style="left:0;top:96px;width:991px;height:24px;background:#ffffff;border-bottom:1px solid #dedede"></div>
<div class="r" style="left:74px;top:96px;width:1px;height:23px;background:#e4e4e4"></div>
<div class="r" style="left:413px;top:96px;width:1px;height:23px;background:#d2d2d2"></div>
<div class="r" style="left:513px;top:96px;width:1px;height:23px;background:#e4e4e4"></div>
<div class="r" style="left:603px;top:96px;width:1px;height:23px;background:#e4e4e4"></div>
<div class="r" style="left:693px;top:96px;width:1px;height:23px;background:#e4e4e4"></div>
<div class="r" style="left:773px;top:96px;width:1px;height:23px;background:#e4e4e4"></div>
<div class="r" style="left:853px;top:96px;width:1px;height:23px;background:#e4e4e4"></div>
<div class="r" style="left:933px;top:96px;width:1px;height:23px;background:#e4e4e4"></div>
<div class="ic" style="left:11px;top:104px"><svg width="12" height="9" viewBox="0 0 12 9"><rect x="0" y="0" width="1" height="2" fill="#0a0a0a"/><rect x="0" y="3" width="1" height="2" fill="#0a0a0a"/><rect x="0" y="6" width="1" height="2" fill="#0a0a0a"/><rect x="3" y="0" width="1" height="2" fill="#0a0a0a"/><rect x="3" y="3" width="1" height="2" fill="#0a0a0a"/><rect x="3" y="6" width="1" height="2" fill="#0a0a0a"/><rect x="6" y="0" width="1" height="2" fill="#0a0a0a"/><rect x="6" y="3" width="1" height="2" fill="#0a0a0a"/><rect x="6" y="6" width="1" height="2" fill="#0a0a0a"/><rect x="9" y="0" width="1" height="2" fill="#0a0a0a"/><rect x="9" y="3" width="1" height="2" fill="#0a0a0a"/><rect x="9" y="6" width="1" height="2" fill="#0a0a0a"/></svg></div>
<div class="ic" style="left:36px;top:99px"><svg width="17" height="17" viewBox="0 0 17 17"><path d="M8.5 2L10.36 6.46L15.1 6.95L11.5 10.1L12.6 15L8.5 12.4L4.46 15L5.5 10.1L1.9 6.95L6.63 6.46Z" fill="none" stroke="#1a1a1a" stroke-width="1.45" stroke-linejoin="round"/></svg></div>
<div class="t" style="left:83px;top:99px;height:18px;line-height:18px;width:322px;overflow:hidden;font-size:12px;color:#2e2e2e;letter-spacing:-0.035px">FS_Pole_75_x-ref_z-ref_50M_Sim_1__20_0025_Validation</div>
<div class="t" style="left:702px;top:102px;font-size:12px;color:#2e2e2e;letter-spacing:0.1px">0.0215</div>
<div class="t" style="left:782px;top:102px;font-size:12px;color:#2e2e2e;letter-spacing:0.1px">13e-3</div>
<div class="t" style="left:862px;top:102px;font-size:12px;color:#2e2e2e;letter-spacing:0.1px">11e-3</div>
<div class="t" style="left:942px;top:102px;font-size:12px;color:#2e2e2e;letter-spacing:0.1px">19.672</div>
<div class="r" style="left:0;top:120px;width:991px;height:24px;background:#fafafa;border-bottom:1px solid #dedede"></div>
<div class="r" style="left:74px;top:120px;width:1px;height:23px;background:#e4e4e4"></div>
<div class="r" style="left:413px;top:120px;width:1px;height:23px;background:#d2d2d2"></div>
<div class="r" style="left:513px;top:120px;width:1px;height:23px;background:#e4e4e4"></div>
<div class="r" style="left:603px;top:120px;width:1px;height:23px;background:#e4e4e4"></div>
<div class="r" style="left:693px;top:120px;width:1px;height:23px;background:#e4e4e4"></div>
<div class="r" style="left:773px;top:120px;width:1px;height:23px;background:#e4e4e4"></div>
<div class="r" style="left:853px;top:120px;width:1px;height:23px;background:#e4e4e4"></div>
<div class="r" style="left:933px;top:120px;width:1px;height:23px;background:#e4e4e4"></div>
<div class="ic" style="left:11px;top:128px"><svg width="12" height="9" viewBox="0 0 12 9"><rect x="0" y="0" width="1" height="2" fill="#0a0a0a"/><rect x="0" y="3" width="1" height="2" fill="#0a0a0a"/><rect x="0" y="6" width="1" height="2" fill="#0a0a0a"/><rect x="3" y="0" width="1" height="2" fill="#0a0a0a"/><rect x="3" y="3" width="1" height="2" fill="#0a0a0a"/><rect x="3" y="6" width="1" height="2" fill="#0a0a0a"/><rect x="6" y="0" width="1" height="2" fill="#0a0a0a"/><rect x="6" y="3" width="1" height="2" fill="#0a0a0a"/><rect x="6" y="6" width="1" height="2" fill="#0a0a0a"/><rect x="9" y="0" width="1" height="2" fill="#0a0a0a"/><rect x="9" y="3" width="1" height="2" fill="#0a0a0a"/><rect x="9" y="6" width="1" height="2" fill="#0a0a0a"/></svg></div>
<div class="ic" style="left:36px;top:123px"><svg width="17" height="17" viewBox="0 0 17 17"><path d="M8.5 2L10.36 6.46L15.1 6.95L11.5 10.1L12.6 15L8.5 12.4L4.46 15L5.5 10.1L1.9 6.95L6.63 6.46Z" fill="none" stroke="#1a1a1a" stroke-width="1.45" stroke-linejoin="round"/></svg></div>
<div class="t" style="left:83px;top:123px;height:18px;line-height:18px;width:322px;overflow:hidden;font-size:12px;color:#2e2e2e;letter-spacing:0.22px">Experiment4</div>
<div class="t" style="left:702px;top:126px;font-size:12px;color:#2e2e2e;letter-spacing:0.1px">0.0234</div>
<div class="t" style="left:782px;top:126px;font-size:12px;color:#2e2e2e;letter-spacing:0.1px">1e-2</div>
<div class="t" style="left:862px;top:126px;font-size:12px;color:#2e2e2e;letter-spacing:0.1px">1e-2</div>
<div class="t" style="left:942px;top:126px;font-size:12px;color:#2e2e2e;letter-spacing:0.1px">15.0</div>
<div class="r" style="left:0;top:144px;width:991px;height:24px;background:#b0d5df;border-bottom:1px solid #dedede"></div>
<div class="r" style="left:74px;top:144px;width:1px;height:23px;background:#a3c5ce"></div>
<div class="r" style="left:413px;top:144px;width:1px;height:23px;background:#d2d2d2"></div>
<div class="r" style="left:513px;top:144px;width:1px;height:23px;background:#a3c5ce"></div>
<div class="r" style="left:603px;top:144px;width:1px;height:23px;background:#a3c5ce"></div>
<div class="r" style="left:693px;top:144px;width:1px;height:23px;background:#a3c5ce"></div>
<div class="r" style="left:773px;top:144px;width:1px;height:23px;background:#a3c5ce"></div>
<div class="r" style="left:853px;top:144px;width:1px;height:23px;background:#a3c5ce"></div>
<div class="r" style="left:933px;top:144px;width:1px;height:23px;background:#a3c5ce"></div>
<div class="ic" style="left:11px;top:152px"><svg width="12" height="9" viewBox="0 0 12 9"><rect x="0" y="0" width="1" height="2" fill="#0a0a0a"/><rect x="0" y="3" width="1" height="2" fill="#0a0a0a"/><rect x="0" y="6" width="1" height="2" fill="#0a0a0a"/><rect x="3" y="0" width="1" height="2" fill="#0a0a0a"/><rect x="3" y="3" width="1" height="2" fill="#0a0a0a"/><rect x="3" y="6" width="1" height="2" fill="#0a0a0a"/><rect x="6" y="0" width="1" height="2" fill="#0a0a0a"/><rect x="6" y="3" width="1" height="2" fill="#0a0a0a"/><rect x="6" y="6" width="1" height="2" fill="#0a0a0a"/><rect x="9" y="0" width="1" height="2" fill="#0a0a0a"/><rect x="9" y="3" width="1" height="2" fill="#0a0a0a"/><rect x="9" y="6" width="1" height="2" fill="#0a0a0a"/></svg></div>
<div class="ic" style="left:36px;top:147px"><svg width="17" height="17" viewBox="0 0 17 17"><path d="M8.5 2L10.36 6.46L15.1 6.95L11.5 10.1L12.6 15L8.5 12.4L4.46 15L5.5 10.1L1.9 6.95L6.63 6.46Z" fill="#1a1a1a" stroke="#1a1a1a" stroke-width="1.45" stroke-linejoin="round"/></svg></div>
<div class="t" style="left:83px;top:147px;height:18px;line-height:18px;width:322px;overflow:hidden;font-size:12px;color:#2e2e2e;letter-spacing:-0.035px">FS_Pole_75_x-ref_z-ref_50M_Sim_1__0013_Validation_p</div>
<div class="t" style="left:702px;top:150px;font-size:12px;color:#2e2e2e;letter-spacing:0.1px">0.0211</div>
<div class="r" style="left:0;top:168px;width:991px;height:24px;background:#fafafa;border-bottom:1px solid #dedede"></div>
<div class="r" style="left:74px;top:168px;width:1px;height:23px;background:#e4e4e4"></div>
<div class="r" style="left:413px;top:168px;width:1px;height:23px;background:#d2d2d2"></div>
<div class="r" style="left:513px;top:168px;width:1px;height:23px;background:#e4e4e4"></div>
<div class="r" style="left:603px;top:168px;width:1px;height:23px;background:#e4e4e4"></div>
<div class="r" style="left:693px;top:168px;width:1px;height:23px;background:#e4e4e4"></div>
<div class="r" style="left:773px;top:168px;width:1px;height:23px;background:#e4e4e4"></div>
<div class="r" style="left:853px;top:168px;width:1px;height:23px;background:#e4e4e4"></div>
<div class="r" style="left:933px;top:168px;width:1px;height:23px;background:#e4e4e4"></div>
<div class="ic" style="left:11px;top:176px"><svg width="12" height="9" viewBox="0 0 12 9"><rect x="0" y="0" width="1" height="2" fill="#0a0a0a"/><rect x="0" y="3" width="1" height="2" fill="#0a0a0a"/><rect x="0" y="6" width="1" height="2" fill="#0a0a0a"/><rect x="3" y="0" width="1" height="2" fill="#0a0a0a"/><rect x="3" y="3" width="1" height="2" fill="#0a0a0a"/><rect x="3" y="6" width="1" height="2" fill="#0a0a0a"/><rect x="6" y="0" width="1" height="2" fill="#0a0a0a"/><rect x="6" y="3" width="1" height="2" fill="#0a0a0a"/><rect x="6" y="6" width="1" height="2" fill="#0a0a0a"/><rect x="9" y="0" width="1" height="2" fill="#0a0a0a"/><rect x="9" y="3" width="1" height="2" fill="#0a0a0a"/><rect x="9" y="6" width="1" height="2" fill="#0a0a0a"/></svg></div>
<div class="ic" style="left:36px;top:171px"><svg width="17" height="17" viewBox="0 0 17 17"><path d="M8.5 2L10.36 6.46L15.1 6.95L11.5 10.1L12.6 15L8.5 12.4L4.46 15L5.5 10.1L1.9 6.95L6.63 6.46Z" fill="none" stroke="#1a1a1a" stroke-width="1.45" stroke-linejoin="round"/></svg></div>
<div class="t" style="left:83px;top:171px;height:18px;line-height:18px;width:322px;overflow:hidden;font-size:12px;color:#2e2e2e;letter-spacing:-0.035px">FS_Pole_75_x-ref_z-ref_50M_Sim_1__0031_Validation_p</div>
<div class="t" style="left:782px;top:174px;font-size:12px;color:#2e2e2e;letter-spacing:0.1px">1e-2</div>
<div class="t" style="left:862px;top:174px;font-size:12px;color:#2e2e2e;letter-spacing:0.1px">1e-2</div>
<div class="t" style="left:942px;top:174px;font-size:12px;color:#2e2e2e;letter-spacing:0.1px">15.0</div>
<div class="r" style="left:0;top:192px;width:991px;height:24px;background:#ffffff;border-bottom:1px solid #dedede"></div>
<div class="r" style="left:74px;top:192px;width:1px;height:23px;background:#e4e4e4"></div>
<div class="r" style="left:413px;top:192px;width:1px;height:23px;background:#d2d2d2"></div>
<div class="r" style="left:513px;top:192px;width:1px;height:23px;background:#e4e4e4"></div>
<div class="r" style="left:603px;top:192px;width:1px;height:23px;background:#e4e4e4"></div>
<div class="r" style="left:693px;top:192px;width:1px;height:23px;background:#e4e4e4"></div>
<div class="r" style="left:773px;top:192px;width:1px;height:23px;background:#e4e4e4"></div>
<div class="r" style="left:853px;top:192px;width:1px;height:23px;background:#e4e4e4"></div>
<div class="r" style="left:933px;top:192px;width:1px;height:23px;background:#e4e4e4"></div>
<div class="ic" style="left:11px;top:200px"><svg width="12" height="9" viewBox="0 0 12 9"><rect x="0" y="0" width="1" height="2" fill="#0a0a0a"/><rect x="0" y="3" width="1" height="2" fill="#0a0a0a"/><rect x="0" y="6" width="1" height="2" fill="#0a0a0a"/><rect x="3" y="0" width="1" height="2" fill="#0a0a0a"/><rect x="3" y="3" width="1" height="2" fill="#0a0a0a"/><rect x="3" y="6" width="1" height="2" fill="#0a0a0a"/><rect x="6" y="0" width="1" height="2" fill="#0a0a0a"/><rect x="6" y="3" width="1" height="2" fill="#0a0a0a"/><rect x="6" y="6" width="1" height="2" fill="#0a0a0a"/><rect x="9" y="0" width="1" height="2" fill="#0a0a0a"/><rect x="9" y="3" width="1" height="2" fill="#0a0a0a"/><rect x="9" y="6" width="1" height="2" fill="#0a0a0a"/></svg></div>
<div class="ic" style="left:36px;top:195px"><svg width="17" height="17" viewBox="0 0 17 17"><path d="M8.5 2L10.36 6.46L15.1 6.95L11.5 10.1L12.6 15L8.5 12.4L4.46 15L5.5 10.1L1.9 6.95L6.63 6.46Z" fill="none" stroke="#1a1a1a" stroke-width="1.45" stroke-linejoin="round"/></svg></div>
<div class="t" style="left:83px;top:195px;height:18px;line-height:18px;width:322px;overflow:hidden;font-size:12px;color:#2e2e2e;letter-spacing:-0.035px">FS_Pole_75_x-ref_z-ref_50M_Sim_1__19_0025_Validation</div>
<div class="t" style="left:702px;top:198px;font-size:12px;color:#2e2e2e;letter-spacing:0.1px">0.0194</div>
<div class="t" style="left:782px;top:198px;font-size:12px;color:#2e2e2e;letter-spacing:0.1px">8e-3</div>
<div class="t" style="left:862px;top:198px;font-size:12px;color:#2e2e2e;letter-spacing:0.1px">9e-3</div>
<div class="t" style="left:942px;top:198px;font-size:12px;color:#2e2e2e;letter-spacing:0.1px">18.486</div>
<div class="r" style="left:0;top:216px;width:991px;height:24px;background:#b0d5df;border-bottom:1px solid #dedede"></div>
<div class="r" style="left:74px;top:216px;width:1px;height:23px;background:#a3c5ce"></div>
<div class="r" style="left:413px;top:216px;width:1px;height:23px;background:#d2d2d2"></div>
<div class="r" style="left:513px;top:216px;width:1px;height:23px;background:#a3c5ce"></div>
<div class="r" style="left:603px;top:216px;width:1px;height:23px;background:#a3c5ce"></div>
<div class="r" style="left:693px;top:216px;width:1px;height:23px;background:#a3c5ce"></div>
<div class="r" style="left:773px;top:216px;width:1px;height:23px;background:#a3c5ce"></div>
<div class="r" style="left:853px;top:216px;width:1px;height:23px;background:#a3c5ce"></div>
<div class="r" style="left:933px;top:216px;width:1px;height:23px;background:#a3c5ce"></div>
<div class="ic" style="left:11px;top:224px"><svg width="12" height="9" viewBox="0 0 12 9"><rect x="0" y="0" width="1" height="2" fill="#0a0a0a"/><rect x="0" y="3" width="1" height="2" fill="#0a0a0a"/><rect x="0" y="6" width="1" height="2" fill="#0a0a0a"/><rect x="3" y="0" width="1" height="2" fill="#0a0a0a"/><rect x="3" y="3" width="1" height="2" fill="#0a0a0a"/><rect x="3" y="6" width="1" height="2" fill="#0a0a0a"/><rect x="6" y="0" width="1" height="2" fill="#0a0a0a"/><rect x="6" y="3" width="1" height="2" fill="#0a0a0a"/><rect x="6" y="6" width="1" height="2" fill="#0a0a0a"/><rect x="9" y="0" width="1" height="2" fill="#0a0a0a"/><rect x="9" y="3" width="1" height="2" fill="#0a0a0a"/><rect x="9" y="6" width="1" height="2" fill="#0a0a0a"/></svg></div>
<div class="ic" style="left:36px;top:219px"><svg width="17" height="17" viewBox="0 0 17 17"><path d="M8.5 2L10.36 6.46L15.1 6.95L11.5 10.1L12.6 15L8.5 12.4L4.46 15L5.5 10.1L1.9 6.95L6.63 6.46Z" fill="#1a1a1a" stroke="#1a1a1a" stroke-width="1.45" stroke-linejoin="round"/></svg></div>
<div class="r" style="left:75px;top:216px;width:338px;height:24px;background:#e9b6c2;border:1px solid #9e1f3d"></div>
<div class="t" style="left:83px;top:219px;height:18px;line-height:18px;width:322px;overflow:hidden;font-size:12px;color:#2e2e2e;letter-spacing:-0.17px">FS_AEMDB_90_x-ref_z-ref_50M_Sim_1__0013_VT_-</div>
<div class="t" style="left:702px;top:222px;font-size:12px;color:#2e2e2e;letter-spacing:0.1px">0.0231</div>
<div class="t" style="left:782px;top:222px;font-size:12px;color:#2e2e2e;letter-spacing:0.1px">1e-2</div>
<div class="t" style="left:862px;top:222px;font-size:12px;color:#2e2e2e;letter-spacing:0.1px">1e-2</div>
<div class="t" style="left:942px;top:222px;font-size:12px;color:#2e2e2e;letter-spacing:0.1px">15.0</div>
<div class="r" style="left:0;top:240px;width:991px;height:24px;background:#ffffff;border-bottom:1px solid #dedede"></div>
<div class="r" style="left:74px;top:240px;width:1px;height:23px;background:#e4e4e4"></div>
<div class="r" style="left:413px;top:240px;width:1px;height:23px;background:#d2d2d2"></div>
<div class="r" style="left:513px;top:240px;width:1px;height:23px;background:#e4e4e4"></div>
<div class="r" style="left:603px;top:240px;width:1px;height:23px;background:#e4e4e4"></div>
<div class="r" style="left:693px;top:240px;width:1px;height:23px;background:#e4e4e4"></div>
<div class="r" style="left:773px;top:240px;width:1px;height:23px;background:#e4e4e4"></div>
<div class="r" style="left:853px;top:240px;width:1px;height:23px;background:#e4e4e4"></div>
<div class="r" style="left:933px;top:240px;width:1px;height:23px;background:#e4e4e4"></div>
<div class="ic" style="left:11px;top:248px"><svg width="12" height="9" viewBox="0 0 12 9"><rect x="0" y="0" width="1" height="2" fill="#0a0a0a"/><rect x="0" y="3" width="1" height="2" fill="#0a0a0a"/><rect x="0" y="6" width="1" height="2" fill="#0a0a0a"/><rect x="3" y="0" width="1" height="2" fill="#0a0a0a"/><rect x="3" y="3" width="1" height="2" fill="#0a0a0a"/><rect x="3" y="6" width="1" height="2" fill="#0a0a0a"/><rect x="6" y="0" width="1" height="2" fill="#0a0a0a"/><rect x="6" y="3" width="1" height="2" fill="#0a0a0a"/><rect x="6" y="6" width="1" height="2" fill="#0a0a0a"/><rect x="9" y="0" width="1" height="2" fill="#0a0a0a"/><rect x="9" y="3" width="1" height="2" fill="#0a0a0a"/><rect x="9" y="6" width="1" height="2" fill="#0a0a0a"/></svg></div>
<div class="ic" style="left:36px;top:243px"><svg width="17" height="17" viewBox="0 0 17 17"><path d="M8.5 2L10.36 6.46L15.1 6.95L11.5 10.1L12.6 15L8.5 12.4L4.46 15L5.5 10.1L1.9 6.95L6.63 6.46Z" fill="none" stroke="#1a1a1a" stroke-width="1.45" stroke-linejoin="round"/></svg></div>
<div class="t" style="left:83px;top:243px;height:18px;line-height:18px;width:322px;overflow:hidden;font-size:12px;color:#2e2e2e;letter-spacing:0.22px">Simulation1</div>
<div class="t" style="left:702px;top:246px;font-size:12px;color:#2e2e2e;letter-spacing:0.1px">0.0168</div>
<div class="t" style="left:782px;top:246px;font-size:12px;color:#2e2e2e;letter-spacing:0.1px">1e-2</div>
<div class="t" style="left:862px;top:246px;font-size:12px;color:#2e2e2e;letter-spacing:0.1px">1e-2</div>
<div class="t" style="left:942px;top:246px;font-size:12px;color:#2e2e2e;letter-spacing:0.1px">15.0</div>
<div class="r" style="left:0;top:264px;width:991px;height:24px;background:#fafafa;border-bottom:1px solid #dedede"></div>
<div class="r" style="left:74px;top:264px;width:1px;height:23px;background:#e4e4e4"></div>
<div class="r" style="left:413px;top:264px;width:1px;height:23px;background:#d2d2d2"></div>
<div class="r" style="left:513px;top:264px;width:1px;height:23px;background:#e4e4e4"></div>
<div class="r" style="left:603px;top:264px;width:1px;height:23px;background:#e4e4e4"></div>
<div class="r" style="left:693px;top:264px;width:1px;height:23px;background:#e4e4e4"></div>
<div class="r" style="left:773px;top:264px;width:1px;height:23px;background:#e4e4e4"></div>
<div class="r" style="left:853px;top:264px;width:1px;height:23px;background:#e4e4e4"></div>
<div class="r" style="left:933px;top:264px;width:1px;height:23px;background:#e4e4e4"></div>
<div class="ic" style="left:11px;top:272px"><svg width="12" height="9" viewBox="0 0 12 9"><rect x="0" y="0" width="1" height="2" fill="#0a0a0a"/><rect x="0" y="3" width="1" height="2" fill="#0a0a0a"/><rect x="0" y="6" width="1" height="2" fill="#0a0a0a"/><rect x="3" y="0" width="1" height="2" fill="#0a0a0a"/><rect x="3" y="3" width="1" height="2" fill="#0a0a0a"/><rect x="3" y="6" width="1" height="2" fill="#0a0a0a"/><rect x="6" y="0" width="1" height="2" fill="#0a0a0a"/><rect x="6" y="3" width="1" height="2" fill="#0a0a0a"/><rect x="6" y="6" width="1" height="2" fill="#0a0a0a"/><rect x="9" y="0" width="1" height="2" fill="#0a0a0a"/><rect x="9" y="3" width="1" height="2" fill="#0a0a0a"/><rect x="9" y="6" width="1" height="2" fill="#0a0a0a"/></svg></div>
<div class="ic" style="left:36px;top:267px"><svg width="17" height="17" viewBox="0 0 17 17"><path d="M8.5 2L10.36 6.46L15.1 6.95L11.5 10.1L12.6 15L8.5 12.4L4.46 15L5.5 10.1L1.9 6.95L6.63 6.46Z" fill="none" stroke="#1a1a1a" stroke-width="1.45" stroke-linejoin="round"/></svg></div>
<div class="t" style="left:83px;top:267px;height:18px;line-height:18px;width:322px;overflow:hidden;font-size:12px;color:#2e2e2e;letter-spacing:0.22px">Simulation3-2</div>
<div class="t" style="left:702px;top:270px;font-size:12px;color:#2e2e2e;letter-spacing:0.1px">0.0194</div>
<div class="t" style="left:782px;top:270px;font-size:12px;color:#2e2e2e;letter-spacing:0.1px">1e-2</div>
<div class="t" style="left:862px;top:270px;font-size:12px;color:#2e2e2e;letter-spacing:0.1px">1e-2</div>
<div class="t" style="left:942px;top:270px;font-size:12px;color:#2e2e2e;letter-spacing:0.1px">15.0</div>
<div class="r" style="left:0;top:288px;width:991px;height:24px;background:#ffffff;border-bottom:1px solid #dedede"></div>
<div class="r" style="left:74px;top:288px;width:1px;height:23px;background:#e4e4e4"></div>
<div class="r" style="left:413px;top:288px;width:1px;height:23px;background:#d2d2d2"></div>
<div class="r" style="left:513px;top:288px;width:1px;height:23px;background:#e4e4e4"></div>
<div class="r" style="left:603px;top:288px;width:1px;height:23px;background:#e4e4e4"></div>
<div class="r" style="left:693px;top:288px;width:1px;height:23px;background:#e4e4e4"></div>
<div class="r" style="left:773px;top:288px;width:1px;height:23px;background:#e4e4e4"></div>
<div class="r" style="left:853px;top:288px;width:1px;height:23px;background:#e4e4e4"></div>
<div class="r" style="left:933px;top:288px;width:1px;height:23px;background:#e4e4e4"></div>
<div class="ic" style="left:11px;top:296px"><svg width="12" height="9" viewBox="0 0 12 9"><rect x="0" y="0" width="1" height="2" fill="#0a0a0a"/><rect x="0" y="3" width="1" height="2" fill="#0a0a0a"/><rect x="0" y="6" width="1" height="2" fill="#0a0a0a"/><rect x="3" y="0" width="1" height="2" fill="#0a0a0a"/><rect x="3" y="3" width="1" height="2" fill="#0a0a0a"/><rect x="3" y="6" width="1" height="2" fill="#0a0a0a"/><rect x="6" y="0" width="1" height="2" fill="#0a0a0a"/><rect x="6" y="3" width="1" height="2" fill="#0a0a0a"/><rect x="6" y="6" width="1" height="2" fill="#0a0a0a"/><rect x="9" y="0" width="1" height="2" fill="#0a0a0a"/><rect x="9" y="3" width="1" height="2" fill="#0a0a0a"/><rect x="9" y="6" width="1" height="2" fill="#0a0a0a"/></svg></div>
<div class="ic" style="left:36px;top:291px"><svg width="17" height="17" viewBox="0 0 17 17"><path d="M8.5 2L10.36 6.46L15.1 6.95L11.5 10.1L12.6 15L8.5 12.4L4.46 15L5.5 10.1L1.9 6.95L6.63 6.46Z" fill="none" stroke="#1a1a1a" stroke-width="1.45" stroke-linejoin="round"/></svg></div>
<div class="t" style="left:83px;top:291px;height:18px;line-height:18px;width:322px;overflow:hidden;font-size:12px;color:#2e2e2e;letter-spacing:-0.035px">FS_Pole_75_x-ref_z-ref_50M_Sim_1__36_0025_Validation</div>
<div class="t" style="left:702px;top:294px;font-size:12px;color:#2e2e2e;letter-spacing:0.1px">0.0150</div>
<div class="t" style="left:782px;top:294px;font-size:12px;color:#2e2e2e;letter-spacing:0.1px">6e-3</div>
<div class="t" style="left:862px;top:294px;font-size:12px;color:#2e2e2e;letter-spacing:0.1px">1e-2</div>
<div class="t" style="left:942px;top:294px;font-size:12px;color:#2e2e2e;letter-spacing:0.1px">15.307</div>
<div class="r" style="left:0;top:312px;width:991px;height:24px;background:#fafafa;border-bottom:1px solid #dedede"></div>
<div class="r" style="left:74px;top:312px;width:1px;height:23px;background:#e4e4e4"></div>
<div class="r" style="left:413px;top:312px;width:1px;height:23px;background:#d2d2d2"></div>
<div class="r" style="left:513px;top:312px;width:1px;height:23px;background:#e4e4e4"></div>
<div class="r" style="left:603px;top:312px;width:1px;height:23px;background:#e4e4e4"></div>
<div class="r" style="left:693px;top:312px;width:1px;height:23px;background:#e4e4e4"></div>
<div class="r" style="left:773px;top:312px;width:1px;height:23px;background:#e4e4e4"></div>
<div class="r" style="left:853px;top:312px;width:1px;height:23px;background:#e4e4e4"></div>
<div class="r" style="left:933px;top:312px;width:1px;height:23px;background:#e4e4e4"></div>
<div class="ic" style="left:11px;top:320px"><svg width="12" height="9" viewBox="0 0 12 9"><rect x="0" y="0" width="1" height="2" fill="#0a0a0a"/><rect x="0" y="3" width="1" height="2" fill="#0a0a0a"/><rect x="0" y="6" width="1" height="2" fill="#0a0a0a"/><rect x="3" y="0" width="1" height="2" fill="#0a0a0a"/><rect x="3" y="3" width="1" height="2" fill="#0a0a0a"/><rect x="3" y="6" width="1" height="2" fill="#0a0a0a"/><rect x="6" y="0" width="1" height="2" fill="#0a0a0a"/><rect x="6" y="3" width="1" height="2" fill="#0a0a0a"/><rect x="6" y="6" width="1" height="2" fill="#0a0a0a"/><rect x="9" y="0" width="1" height="2" fill="#0a0a0a"/><rect x="9" y="3" width="1" height="2" fill="#0a0a0a"/><rect x="9" y="6" width="1" height="2" fill="#0a0a0a"/></svg></div>
<div class="ic" style="left:36px;top:315px"><svg width="17" height="17" viewBox="0 0 17 17"><path d="M8.5 2L10.36 6.46L15.1 6.95L11.5 10.1L12.6 15L8.5 12.4L4.46 15L5.5 10.1L1.9 6.95L6.63 6.46Z" fill="none" stroke="#1a1a1a" stroke-width="1.45" stroke-linejoin="round"/></svg></div>
<div class="t" style="left:83px;top:315px;height:18px;line-height:18px;width:322px;overflow:hidden;font-size:12px;color:#2e2e2e;letter-spacing:-0.035px">FS_Pole_75_x-ref_z-ref_50M_Sim_1__38_0025_Validation</div>
<div class="t" style="left:702px;top:318px;font-size:12px;color:#2e2e2e;letter-spacing:0.1px">0.0152</div>
<div class="t" style="left:782px;top:318px;font-size:12px;color:#2e2e2e;letter-spacing:0.1px">6e-3</div>
<div class="t" style="left:862px;top:318px;font-size:12px;color:#2e2e2e;letter-spacing:0.1px">8e-3</div>
<div class="t" style="left:942px;top:318px;font-size:12px;color:#2e2e2e;letter-spacing:0.1px">19.995</div>
<div class="r" style="left:0;top:336px;width:991px;height:24px;background:#ffffff;border-bottom:1px solid #dedede"></div>
<div class="r" style="left:74px;top:336px;width:1px;height:23px;background:#e4e4e4"></div>
<div class="r" style="left:413px;top:336px;width:1px;height:23px;background:#d2d2d2"></div>
<div class="r" style="left:513px;top:336px;width:1px;height:23px;background:#e4e4e4"></div>
<div class="r" style="left:603px;top:336px;width:1px;height:23px;background:#e4e4e4"></div>
<div class="r" style="left:693px;top:336px;width:1px;height:23px;background:#e4e4e4"></div>
<div class="r" style="left:773px;top:336px;width:1px;height:23px;background:#e4e4e4"></div>
<div class="r" style="left:853px;top:336px;width:1px;height:23px;background:#e4e4e4"></div>
<div class="r" style="left:933px;top:336px;width:1px;height:23px;background:#e4e4e4"></div>
<div class="ic" style="left:11px;top:344px"><svg width="12" height="9" viewBox="0 0 12 9"><rect x="0" y="0" width="1" height="2" fill="#0a0a0a"/><rect x="0" y="3" width="1" height="2" fill="#0a0a0a"/><rect x="0" y="6" width="1" height="2" fill="#0a0a0a"/><rect x="3" y="0" width="1" height="2" fill="#0a0a0a"/><rect x="3" y="3" width="1" height="2" fill="#0a0a0a"/><rect x="3" y="6" width="1" height="2" fill="#0a0a0a"/><rect x="6" y="0" width="1" height="2" fill="#0a0a0a"/><rect x="6" y="3" width="1" height="2" fill="#0a0a0a"/><rect x="6" y="6" width="1" height="2" fill="#0a0a0a"/><rect x="9" y="0" width="1" height="2" fill="#0a0a0a"/><rect x="9" y="3" width="1" height="2" fill="#0a0a0a"/><rect x="9" y="6" width="1" height="2" fill="#0a0a0a"/></svg></div>
<div class="ic" style="left:36px;top:339px"><svg width="17" height="17" viewBox="0 0 17 17"><path d="M8.5 2L10.36 6.46L15.1 6.95L11.5 10.1L12.6 15L8.5 12.4L4.46 15L5.5 10.1L1.9 6.95L6.63 6.46Z" fill="none" stroke="#1a1a1a" stroke-width="1.45" stroke-linejoin="round"/></svg></div>
<div class="t" style="left:83px;top:339px;height:18px;line-height:18px;width:322px;overflow:hidden;font-size:12px;color:#2e2e2e;letter-spacing:0.22px">Experiment3</div>
<div class="t" style="left:702px;top:342px;font-size:12px;color:#2e2e2e;letter-spacing:0.1px">0.0187</div>
<div class="t" style="left:782px;top:342px;font-size:12px;color:#2e2e2e;letter-spacing:0.1px">1e-2</div>
<div class="t" style="left:862px;top:342px;font-size:12px;color:#2e2e2e;letter-spacing:0.1px">1e-2</div>
<div class="t" style="left:942px;top:342px;font-size:12px;color:#2e2e2e;letter-spacing:0.1px">15.0</div>
<div class="r" style="left:0;top:360px;width:991px;height:24px;background:#fafafa;border-bottom:1px solid #dedede"></div>
<div class="r" style="left:74px;top:360px;width:1px;height:23px;background:#e4e4e4"></div>
<div class="r" style="left:413px;top:360px;width:1px;height:23px;background:#d2d2d2"></div>
<div class="r" style="left:513px;top:360px;width:1px;height:23px;background:#e4e4e4"></div>
<div class="r" style="left:603px;top:360px;width:1px;height:23px;background:#e4e4e4"></div>
<div class="r" style="left:693px;top:360px;width:1px;height:23px;background:#e4e4e4"></div>
<div class="r" style="left:773px;top:360px;width:1px;height:23px;background:#e4e4e4"></div>
<div class="r" style="left:853px;top:360px;width:1px;height:23px;background:#e4e4e4"></div>
<div class="r" style="left:933px;top:360px;width:1px;height:23px;background:#e4e4e4"></div>
<div class="ic" style="left:11px;top:368px"><svg width="12" height="9" viewBox="0 0 12 9"><rect x="0" y="0" width="1" height="2" fill="#0a0a0a"/><rect x="0" y="3" width="1" height="2" fill="#0a0a0a"/><rect x="0" y="6" width="1" height="2" fill="#0a0a0a"/><rect x="3" y="0" width="1" height="2" fill="#0a0a0a"/><rect x="3" y="3" width="1" height="2" fill="#0a0a0a"/><rect x="3" y="6" width="1" height="2" fill="#0a0a0a"/><rect x="6" y="0" width="1" height="2" fill="#0a0a0a"/><rect x="6" y="3" width="1" height="2" fill="#0a0a0a"/><rect x="6" y="6" width="1" height="2" fill="#0a0a0a"/><rect x="9" y="0" width="1" height="2" fill="#0a0a0a"/><rect x="9" y="3" width="1" height="2" fill="#0a0a0a"/><rect x="9" y="6" width="1" height="2" fill="#0a0a0a"/></svg></div>
<div class="ic" style="left:36px;top:363px"><svg width="17" height="17" viewBox="0 0 17 17"><path d="M8.5 2L10.36 6.46L15.1 6.95L11.5 10.1L12.6 15L8.5 12.4L4.46 15L5.5 10.1L1.9 6.95L6.63 6.46Z" fill="none" stroke="#1a1a1a" stroke-width="1.45" stroke-linejoin="round"/></svg></div>
<div class="t" style="left:83px;top:363px;height:18px;line-height:18px;width:322px;overflow:hidden;font-size:12px;color:#2e2e2e;letter-spacing:0.22px">Experiment3-2</div>
<div class="t" style="left:702px;top:366px;font-size:12px;color:#2e2e2e;letter-spacing:0.1px">0.0187</div>
<div class="t" style="left:782px;top:366px;font-size:12px;color:#2e2e2e;letter-spacing:0.1px">1e-2</div>
<div class="t" style="left:862px;top:366px;font-size:12px;color:#2e2e2e;letter-spacing:0.1px">1e-2</div>
<div class="t" style="left:942px;top:366px;font-size:12px;color:#2e2e2e;letter-spacing:0.1px">15.0</div>
<div class="r" style="left:0;top:384px;width:991px;height:24px;background:#ffffff;border-bottom:1px solid #dedede"></div>
<div class="r" style="left:74px;top:384px;width:1px;height:23px;background:#e4e4e4"></div>
<div class="r" style="left:413px;top:384px;width:1px;height:23px;background:#d2d2d2"></div>
<div class="r" style="left:513px;top:384px;width:1px;height:23px;background:#e4e4e4"></div>
<div class="r" style="left:603px;top:384px;width:1px;height:23px;background:#e4e4e4"></div>
<div class="r" style="left:693px;top:384px;width:1px;height:23px;background:#e4e4e4"></div>
<div class="r" style="left:773px;top:384px;width:1px;height:23px;background:#e4e4e4"></div>
<div class="r" style="left:853px;top:384px;width:1px;height:23px;background:#e4e4e4"></div>
<div class="r" style="left:933px;top:384px;width:1px;height:23px;background:#e4e4e4"></div>
<div class="ic" style="left:11px;top:392px"><svg width="12" height="9" viewBox="0 0 12 9"><rect x="0" y="0" width="1" height="2" fill="#0a0a0a"/><rect x="0" y="3" width="1" height="2" fill="#0a0a0a"/><rect x="0" y="6" width="1" height="2" fill="#0a0a0a"/><rect x="3" y="0" width="1" height="2" fill="#0a0a0a"/><rect x="3" y="3" width="1" height="2" fill="#0a0a0a"/><rect x="3" y="6" width="1" height="2" fill="#0a0a0a"/><rect x="6" y="0" width="1" height="2" fill="#0a0a0a"/><rect x="6" y="3" width="1" height="2" fill="#0a0a0a"/><rect x="6" y="6" width="1" height="2" fill="#0a0a0a"/><rect x="9" y="0" width="1" height="2" fill="#0a0a0a"/><rect x="9" y="3" width="1" height="2" fill="#0a0a0a"/><rect x="9" y="6" width="1" height="2" fill="#0a0a0a"/></svg></div>
<div class="ic" style="left:36px;top:387px"><svg width="17" height="17" viewBox="0 0 17 17"><path d="M8.5 2L10.36 6.46L15.1 6.95L11.5 10.1L12.6 15L8.5 12.4L4.46 15L5.5 10.1L1.9 6.95L6.63 6.46Z" fill="none" stroke="#1a1a1a" stroke-width="1.45" stroke-linejoin="round"/></svg></div>
<div class="t" style="left:83px;top:387px;height:18px;line-height:18px;width:322px;overflow:hidden;font-size:12px;color:#2e2e2e;letter-spacing:0.22px">Simulation4</div>
<div class="t" style="left:702px;top:390px;font-size:12px;color:#2e2e2e;letter-spacing:0.1px">0.2500</div>
<div class="t" style="left:782px;top:390px;font-size:12px;color:#2e2e2e;letter-spacing:0.1px">1e-2</div>
<div class="t" style="left:862px;top:390px;font-size:12px;color:#2e2e2e;letter-spacing:0.1px">1e-2</div>
<div class="t" style="left:942px;top:390px;font-size:12px;color:#2e2e2e;letter-spacing:0.1px">15.0</div>
<div class="r" style="left:0;top:408px;width:991px;height:24px;background:#fafafa;border-bottom:1px solid #dedede"></div>
<div class="r" style="left:74px;top:408px;width:1px;height:23px;background:#e4e4e4"></div>
<div class="r" style="left:413px;top:408px;width:1px;height:23px;background:#d2d2d2"></div>
<div class="r" style="left:513px;top:408px;width:1px;height:23px;background:#e4e4e4"></div>
<div class="r" style="left:603px;top:408px;width:1px;height:23px;background:#e4e4e4"></div>
<div class="r" style="left:693px;top:408px;width:1px;height:23px;background:#e4e4e4"></div>
<div class="r" style="left:773px;top:408px;width:1px;height:23px;background:#e4e4e4"></div>
<div class="r" style="left:853px;top:408px;width:1px;height:23px;background:#e4e4e4"></div>
<div class="r" style="left:933px;top:408px;width:1px;height:23px;background:#e4e4e4"></div>
<div class="ic" style="left:11px;top:416px"><svg width="12" height="9" viewBox="0 0 12 9"><rect x="0" y="0" width="1" height="2" fill="#0a0a0a"/><rect x="0" y="3" width="1" height="2" fill="#0a0a0a"/><rect x="0" y="6" width="1" height="2" fill="#0a0a0a"/><rect x="3" y="0" width="1" height="2" fill="#0a0a0a"/><rect x="3" y="3" width="1" height="2" fill="#0a0a0a"/><rect x="3" y="6" width="1" height="2" fill="#0a0a0a"/><rect x="6" y="0" width="1" height="2" fill="#0a0a0a"/><rect x="6" y="3" width="1" height="2" fill="#0a0a0a"/><rect x="6" y="6" width="1" height="2" fill="#0a0a0a"/><rect x="9" y="0" width="1" height="2" fill="#0a0a0a"/><rect x="9" y="3" width="1" height="2" fill="#0a0a0a"/><rect x="9" y="6" width="1" height="2" fill="#0a0a0a"/></svg></div>
<div class="ic" style="left:36px;top:411px"><svg width="17" height="17" viewBox="0 0 17 17"><path d="M8.5 2L10.36 6.46L15.1 6.95L11.5 10.1L12.6 15L8.5 12.4L4.46 15L5.5 10.1L1.9 6.95L6.63 6.46Z" fill="none" stroke="#1a1a1a" stroke-width="1.45" stroke-linejoin="round"/></svg></div>
<div class="t" style="left:83px;top:411px;height:18px;line-height:18px;width:322px;overflow:hidden;font-size:12px;color:#2e2e2e;letter-spacing:-0.035px">FS_Pole_75_x-ref_z-ref_50M_Sim_1__13_0025_Validation</div>
<div class="t" style="left:702px;top:414px;font-size:12px;color:#2e2e2e;letter-spacing:0.1px">0.0212</div>
<div class="t" style="left:782px;top:414px;font-size:12px;color:#2e2e2e;letter-spacing:0.1px">1e-2</div>
<div class="t" style="left:862px;top:414px;font-size:12px;color:#2e2e2e;letter-spacing:0.1px">8e-3</div>
<div class="t" style="left:942px;top:414px;font-size:12px;color:#2e2e2e;letter-spacing:0.1px">16.559</div>
<div class="r" style="left:0;top:432px;width:991px;height:24px;background:#ffffff;border-bottom:1px solid #dedede"></div>
<div class="r" style="left:74px;top:432px;width:1px;height:23px;background:#e4e4e4"></div>
<div class="r" style="left:413px;top:432px;width:1px;height:23px;background:#d2d2d2"></div>
<div class="r" style="left:513px;top:432px;width:1px;height:23px;background:#e4e4e4"></div>
<div class="r" style="left:603px;top:432px;width:1px;height:23px;background:#e4e4e4"></div>
<div class="r" style="left:693px;top:432px;width:1px;height:23px;background:#e4e4e4"></div>
<div class="r" style="left:773px;top:432px;width:1px;height:23px;background:#e4e4e4"></div>
<div class="r" style="left:853px;top:432px;width:1px;height:23px;background:#e4e4e4"></div>
<div class="r" style="left:933px;top:432px;width:1px;height:23px;background:#e4e4e4"></div>
<div class="ic" style="left:11px;top:440px"><svg width="12" height="9" viewBox="0 0 12 9"><rect x="0" y="0" width="1" height="2" fill="#0a0a0a"/><rect x="0" y="3" width="1" height="2" fill="#0a0a0a"/><rect x="0" y="6" width="1" height="2" fill="#0a0a0a"/><rect x="3" y="0" width="1" height="2" fill="#0a0a0a"/><rect x="3" y="3" width="1" height="2" fill="#0a0a0a"/><rect x="3" y="6" width="1" height="2" fill="#0a0a0a"/><rect x="6" y="0" width="1" height="2" fill="#0a0a0a"/><rect x="6" y="3" width="1" height="2" fill="#0a0a0a"/><rect x="6" y="6" width="1" height="2" fill="#0a0a0a"/><rect x="9" y="0" width="1" height="2" fill="#0a0a0a"/><rect x="9" y="3" width="1" height="2" fill="#0a0a0a"/><rect x="9" y="6" width="1" height="2" fill="#0a0a0a"/></svg></div>
<div class="ic" style="left:36px;top:435px"><svg width="17" height="17" viewBox="0 0 17 17"><path d="M8.5 2L10.36 6.46L15.1 6.95L11.5 10.1L12.6 15L8.5 12.4L4.46 15L5.5 10.1L1.9 6.95L6.63 6.46Z" fill="none" stroke="#1a1a1a" stroke-width="1.45" stroke-linejoin="round"/></svg></div>
<div class="t" style="left:83px;top:435px;height:18px;line-height:18px;width:322px;overflow:hidden;font-size:12px;color:#2e2e2e;letter-spacing:-0.035px">FS_Pole_75_x-ref_z-ref_50M_Sim_1__12_0025_Validation</div>
<div class="t" style="left:702px;top:438px;font-size:12px;color:#2e2e2e;letter-spacing:0.1px">0.0193</div>
<div class="t" style="left:782px;top:438px;font-size:12px;color:#2e2e2e;letter-spacing:0.1px">7e-3</div>
<div class="t" style="left:862px;top:438px;font-size:12px;color:#2e2e2e;letter-spacing:0.1px">11e-3</div>
<div class="t" style="left:942px;top:438px;font-size:12px;color:#2e2e2e;letter-spacing:0.1px">18.811</div>
<div class="r" style="left:0;top:456px;width:991px;height:24px;background:#fafafa;border-bottom:1px solid #dedede"></div>
<div class="r" style="left:74px;top:456px;width:1px;height:23px;background:#e4e4e4"></div>
<div class="r" style="left:413px;top:456px;width:1px;height:23px;background:#d2d2d2"></div>
<div class="r" style="left:513px;top:456px;width:1px;height:23px;background:#e4e4e4"></div>
<div class="r" style="left:603px;top:456px;width:1px;height:23px;background:#e4e4e4"></div>
<div class="r" style="left:693px;top:456px;width:1px;height:23px;background:#e4e4e4"></div>
<div class="r" style="left:773px;top:456px;width:1px;height:23px;background:#e4e4e4"></div>
<div class="r" style="left:853px;top:456px;width:1px;height:23px;background:#e4e4e4"></div>
<div class="r" style="left:933px;top:456px;width:1px;height:23px;background:#e4e4e4"></div>
<div class="ic" style="left:11px;top:464px"><svg width="12" height="9" viewBox="0 0 12 9"><rect x="0" y="0" width="1" height="2" fill="#0a0a0a"/><rect x="0" y="3" width="1" height="2" fill="#0a0a0a"/><rect x="0" y="6" width="1" height="2" fill="#0a0a0a"/><rect x="3" y="0" width="1" height="2" fill="#0a0a0a"/><rect x="3" y="3" width="1" height="2" fill="#0a0a0a"/><rect x="3" y="6" width="1" height="2" fill="#0a0a0a"/><rect x="6" y="0" width="1" height="2" fill="#0a0a0a"/><rect x="6" y="3" width="1" height="2" fill="#0a0a0a"/><rect x="6" y="6" width="1" height="2" fill="#0a0a0a"/><rect x="9" y="0" width="1" height="2" fill="#0a0a0a"/><rect x="9" y="3" width="1" height="2" fill="#0a0a0a"/><rect x="9" y="6" width="1" height="2" fill="#0a0a0a"/></svg></div>
<div class="ic" style="left:36px;top:459px"><svg width="17" height="17" viewBox="0 0 17 17"><path d="M8.5 2L10.36 6.46L15.1 6.95L11.5 10.1L12.6 15L8.5 12.4L4.46 15L5.5 10.1L1.9 6.95L6.63 6.46Z" fill="none" stroke="#1a1a1a" stroke-width="1.45" stroke-linejoin="round"/></svg></div>
<div class="t" style="left:83px;top:459px;height:18px;line-height:18px;width:330px;overflow:hidden;font-size:12px;color:#2e2e2e;letter-spacing:-0.035px">FS_Pole_75_x-ref_z-ref_50M_Sim_1__0033_Validation_<span style="letter-spacing:-2.1px">p…</span></div>
<div class="t" style="left:422px;top:459px;height:18px;line-height:18px;width:82px;overflow:hidden;text-overflow:ellipsis;font-size:12px;color:#222;letter-spacing:-0.17px">Update submission</div>
<div class="t" style="left:702px;top:462px;font-size:12px;color:#2e2e2e;letter-spacing:0.1px">0.0228</div>
<div class="t" style="left:782px;top:462px;font-size:12px;color:#2e2e2e;letter-spacing:0.1px">1e-2</div>
<div class="t" style="left:862px;top:462px;font-size:12px;color:#2e2e2e;letter-spacing:0.1px">1e-2</div>
<div class="t" style="left:942px;top:462px;font-size:12px;color:#2e2e2e;letter-spacing:0.1px">15.0</div>
</div>
<div class="r" style="left:288px;top:730px;width:991px;height:1px;background:#dcdcdc;"></div>
<div class="r" style="left:701px;top:92px;width:1px;height:638px;background:#d2d2d2;"></div>
<div class="r" style="left:700px;top:92px;width:1px;height:161px;background:#dadada;"></div>
<div class="r" style="left:702px;top:92px;width:8px;height:137px;background:linear-gradient(90deg,rgba(0,0,0,.045),rgba(0,0,0,0));"></div>
<div class="r" style="left:288px;top:731px;width:991px;height:38px;background:#fafafa;"></div>
<div class="t" style="left:1093px;top:746.5px;font-size:12.2px;color:#333;font-weight:normal;letter-spacing:0px;">Selected: <b>2</b></div>
<div class="t" style="left:1167px;top:746.5px;font-size:12.2px;color:#333;font-weight:normal;letter-spacing:0.3px;">Total items: <b>83</b></div>
<div class="r" style="left:675px;top:255px;width:300px;height:465px;background:#fff;border-radius:2px;box-shadow:0 1px 4px rgba(0,0,0,.25);z-index:20">
<div class="r" style="left:8px;top:8px;width:284px;height:56px;background:#ebebeb;border-radius:4px 4px 0 0;border-bottom:1.5px solid #2a2a2a"></div>
<div class="t" style="left:24px;top:28.5px;font-size:14px;color:#666;letter-spacing:-0.1px">Filter Type</div>
<svg class="ic" style="left:266px;top:34px" width="10" height="5" viewBox="0 0 10 5"><path d="M0 0h10L5 5z" fill="#666"/></svg>
<div class="r" style="left:8px;top:85px;width:284px;height:56px;background:#f4f4f4;border-radius:4px 4px 0 0;border-bottom:1px solid #888"></div>
<div class="t" style="left:24px;top:106px;font-size:14px;color:#666;letter-spacing:-0.1px">Value</div>
<div class="r" style="left:8px;top:163px;width:284px;height:1px;background:#e0e0e0"></div>
<div class="r" style="left:8px;top:180px;width:284px;height:56px;background:#f4f4f4;border-radius:4px 4px 0 0;border-bottom:1px solid #888"></div>
<div class="t" style="left:24px;top:200.5px;font-size:14px;color:#666;letter-spacing:-0.1px">Search</div>
<div class="r" style="left:0;top:250px;width:300px;height:207px;overflow:hidden">
<div class="r" style="left:27px;top:34px;width:18px;height:18px;border:2px solid #757575;border-radius:2px"></div>
<div class="t" style="left:80px;top:35.5px;font-size:14px;color:#333;letter-spacing:-0.15px">Experiment1</div>
<div class="r" style="left:27px;top:90px;width:18px;height:18px;border:2px solid #757575;border-radius:2px"></div>
<div class="t" style="left:80px;top:91.5px;font-size:14px;color:#333;letter-spacing:-0.15px">Experiment10</div>
<div class="r" style="left:27px;top:146px;width:18px;height:18px;border:2px solid #757575;border-radius:2px"></div>
<div class="t" style="left:80px;top:147.5px;font-size:14px;color:#333;letter-spacing:-0.15px">Experiment2</div>
<div class="r" style="left:27px;top:202px;width:18px;height:18px;border:2px solid #757575;border-radius:2px"></div>
<div class="t" style="left:80px;top:203.5px;font-size:14px;color:#333;letter-spacing:-0.15px">Experiment3</div>
</div>
</div>
</body></html>
